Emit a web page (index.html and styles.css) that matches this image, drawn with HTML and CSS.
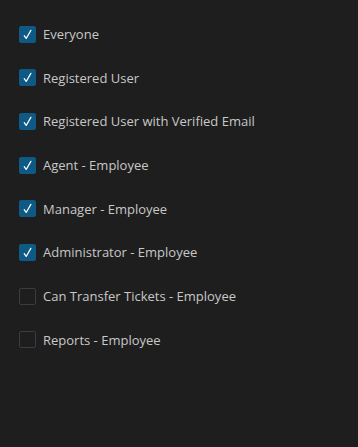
FILE: index.html
```html
<!DOCTYPE html>
<html lang="en">
<head>
  <meta charset="UTF-8">
  <title>Roles</title>
  <link rel="stylesheet" href="styles.css">
</head>
<body>
  <ul class="role-list">
    <li class="role checked"><span class="box"><svg viewBox="0 0 16 16"><path d="M4.5 9.2 L6.6 12.2 L11.6 3.6"/></svg></span>Everyone</li>
    <li class="role checked"><span class="box"><svg viewBox="0 0 16 16"><path d="M4.5 9.2 L6.6 12.2 L11.6 3.6"/></svg></span>Registered User</li>
    <li class="role checked"><span class="box"><svg viewBox="0 0 16 16"><path d="M4.5 9.2 L6.6 12.2 L11.6 3.6"/></svg></span>Registered User with Verified Email</li>
    <li class="role checked"><span class="box"><svg viewBox="0 0 16 16"><path d="M4.5 9.2 L6.6 12.2 L11.6 3.6"/></svg></span>Agent - Employee</li>
    <li class="role checked"><span class="box"><svg viewBox="0 0 16 16"><path d="M4.5 9.2 L6.6 12.2 L11.6 3.6"/></svg></span>Manager - Employee</li>
    <li class="role checked"><span class="box"><svg viewBox="0 0 16 16"><path d="M4.5 9.2 L6.6 12.2 L11.6 3.6"/></svg></span>Administrator - Employee</li>
    <li class="role"><span class="box"></span>Can Transfer Tickets - Employee</li>
    <li class="role"><span class="box"></span>Reports - Employee</li>
  </ul>
</body>
</html>
```

FILE: styles.css
```css
* {
  margin: 0;
  padding: 0;
  box-sizing: border-box;
}

html, body {
  height: 100%;
}

body {
  background-color: #1e1e1e;
  color: #c8c8c8;
  font-family: 'Open Sans', 'Noto Sans', Arial, sans-serif;
  font-size: 13px;
}

.role-list {
  list-style: none;
  padding: 25px 0 0 19px;
  display: flex;
  flex-direction: column;
  gap: 25.7px;
}

.role {
  display: flex;
  align-items: center;
  gap: 7px;
  height: 18px;
}

.box {
  width: 17px;
  height: 17px;
  border: 1px solid #3c3c3c;
  border-radius: 2px;
  display: flex;
  align-items: center;
  justify-content: center;
}

.box svg {
  width: 15px;
  height: 15px;
  fill: none;
  stroke: #ffffff;
  stroke-width: 1.3;
  stroke-linecap: round;
  stroke-linejoin: round;
}

.checked .box {
  background-color: #0e5a85;
  border-color: #0e5a85;
}
```
